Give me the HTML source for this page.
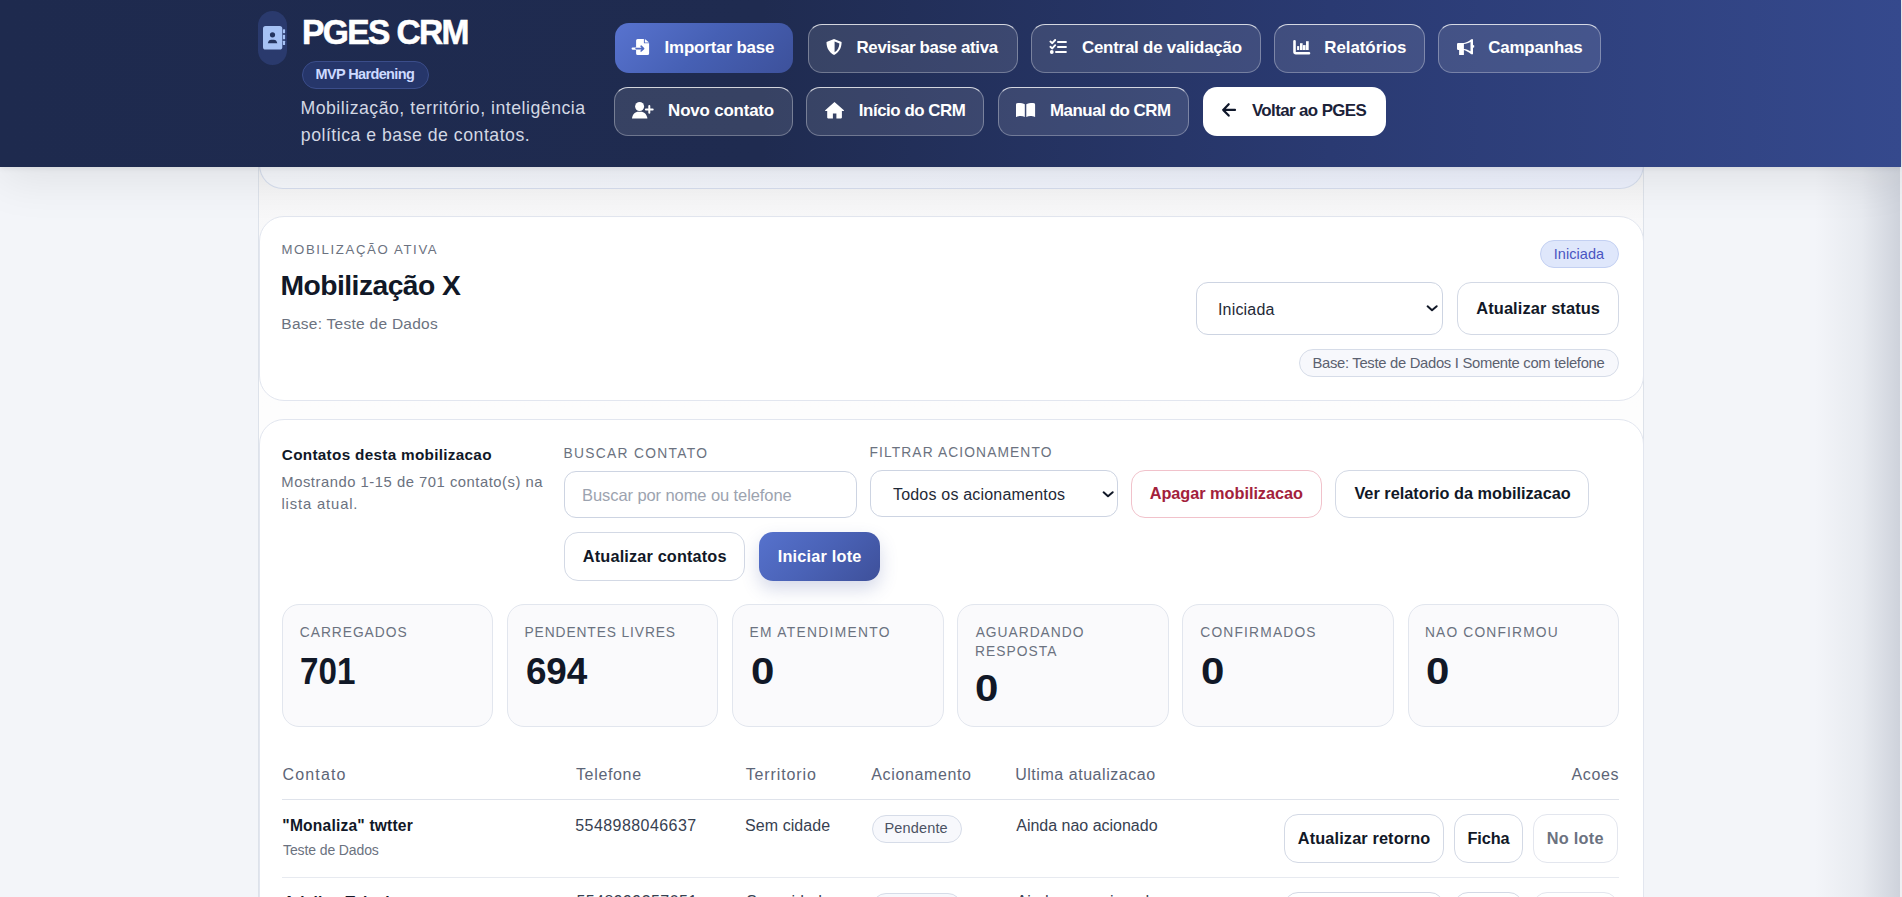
<!DOCTYPE html>
<html><head><meta charset="utf-8"><title>PGES CRM</title>
<style>
html,body{margin:0;padding:0}
body{width:1902px;height:897px;overflow:hidden;position:relative;background:#f3f5f9;font-family:"Liberation Sans",sans-serif}
.tx{position:absolute;white-space:nowrap;font-family:"Liberation Sans",sans-serif}
.bx{position:absolute;box-sizing:border-box}
.edge{left:1815px;top:0;width:85px;height:897px;background:linear-gradient(90deg,rgba(200,205,215,0) 0%,rgba(200,205,215,0.28) 55%,rgba(192,197,208,0.72) 100%)}
.edge2{left:1900px;top:0;width:2px;height:897px;background:#eef0f3}
.wrap{left:258px;top:150px;width:1386px;height:760px;border-left:1px solid #dde2ea;border-right:1px solid #dde2ea;background:linear-gradient(180deg,#f3f3f4 17px,#f8f8f9 66px,#fcfcfd 140px,#fdfdfd 260px)}
.hdr{left:0;top:0;width:1901px;height:167px;background:linear-gradient(90deg,#1e2a4e 0%,#1f2b50 40%,#2a3a72 70%,#35498d 100%);box-shadow:0 2px 5px rgba(0,0,0,0.06),0 12px 44px rgba(0,0,0,0.085)}
.pill{left:258px;top:11px;width:29px;height:54px;border-radius:15px;background:#2a3a6d}
.badge{left:302px;top:61px;width:127px;height:28px;border-radius:14px;background:#26366a;border:1px solid #3b4d8a}
.nb{border-radius:14px;background:rgba(255,255,255,0.11);border:1px solid rgba(255,255,255,0.32);border-top-color:rgba(255,255,255,0.78);border-bottom-color:rgba(255,255,255,0.28)}
.np{border-radius:14px;background:linear-gradient(135deg,#5873cf 0%,#4660b4 50%,#3d519b 100%)}
.nw{border-radius:14px;background:#ffffff}
.card{border-radius:25px;background:#fff;border:1px solid #e2e6ef}
.topcard{left:258.5px;top:90px;width:1385px;height:99px;border-radius:0 0 24px 24px;background:linear-gradient(90deg,#f6f8fc 0%,#edf1fd 100%);border:1px solid #d6deee;border-top:none}
.sel{border-radius:12px;background:#fff;border:1px solid #cdd4e2}
.ob{border-radius:14px;background:#fff;border:1px solid #d3d9e5}
.od{border-radius:14px;background:#fff;border:1px solid #f1c2cb}
.ol{border-radius:14px;background:#fff;border:1px solid #e3e6ee}
.pb{border-radius:14px;background:linear-gradient(135deg,#5672cd 0%,#4a62b6 50%,#3e509a 100%);box-shadow:0 8px 18px rgba(63,82,156,0.22)}
.chipb{border-radius:15px;background:#dfe7fb;border:1px solid #c3d0f2}
.chipg{border-radius:15px;background:#f7f8fc;border:1px solid #d6dce8}
.stat{border-radius:17px;background:#fafafc;border:1px solid #e2e6ee}
.line{height:1px;background:#dfe3eb}
svg.ic{position:absolute;overflow:visible}

</style></head><body>
<div class="bx edge"></div>
<div class="bx edge2"></div>
<div class="bx wrap"></div>
<div class="bx topcard"></div>
<div class="bx card" style="left:258.5px;top:216.0px;width:1385.00px;height:185.00px;"></div>
<div class="bx card" style="left:258.5px;top:419.0px;width:1385.00px;height:681.00px;"></div>
<div class="bx hdr"></div>
<div class="bx pill"></div>
<div class="bx badge"></div>
<svg class="ic" style="left:263px;top:25.6px" width="23" height="24" viewBox="0 0 23 24">
<rect x="0" y="0" width="19.3" height="23.5" rx="2.6" fill="#a6c2f5"/>
<rect x="19.9" y="3.2" width="2.2" height="4" rx="0.6" fill="#a6c2f5"/>
<rect x="19.9" y="8.8" width="2.2" height="4.5" rx="0.6" fill="#a6c2f5"/>
<rect x="19.9" y="14.7" width="2.2" height="4.4" rx="0.6" fill="#a6c2f5"/>
<circle cx="9.5" cy="8.8" r="2.6" fill="#24345f"/>
<path d="M4.8,17.3 C5.3,14.6 6.6,13.7 8.2,13.7 H10.9 C12.5,13.7 13.8,14.6 14.3,17.3 Z" fill="#24345f"/>
</svg>
<div class="bx np" style="left:614.5px;top:23.0px;width:178.50px;height:50.00px;"></div>
<div class="bx nb" style="left:807.7px;top:24.0px;width:209.90px;height:49.00px;"></div>
<div class="bx nb" style="left:1031.3px;top:24.0px;width:229.30px;height:49.00px;"></div>
<div class="bx nb" style="left:1274.2px;top:24.0px;width:150.40px;height:49.00px;"></div>
<div class="bx nb" style="left:1438.0px;top:24.0px;width:162.80px;height:49.00px;"></div>
<div class="bx nb" style="left:614.4px;top:87.0px;width:178.30px;height:49.00px;"></div>
<div class="bx nb" style="left:806.3px;top:87.0px;width:177.50px;height:49.00px;"></div>
<div class="bx nb" style="left:998.2px;top:87.0px;width:191.20px;height:49.00px;"></div>
<div class="bx nw" style="left:1203.0px;top:87.0px;width:183.00px;height:49.00px;"></div>
<svg class="ic" style="left:632.3px;top:38.9px" width="18" height="16" viewBox="0 0 18 16">
<path d="M5.6,0 H11.9 V4.3 H17.1 V14.4 Q17.1,16 15.5,16 H5.7 Q4.1,16 4.1,14.4 V1.6 Q4.1,0 5.6,0 Z" fill="#ffffff"/>
<path d="M12.9,0 L17.1,3.4 H12.9 Z" fill="#ffffff"/>
<path d="M0.6,9.6 H4.1" stroke="#ffffff" stroke-width="2.1" stroke-linecap="round"/>
<path d="M4.1,9.6 H11.3 M9.1,7.2 L11.6,9.6 L9.1,12.0" stroke="#4f69c1" stroke-width="1.6" fill="none" stroke-linecap="round" stroke-linejoin="round"/>
</svg>
<svg class="ic" style="left:825.8px;top:38.9px" width="17" height="16" viewBox="0 0 17 16">
<path fill-rule="evenodd" d="M8.05,0 L15.6,3.1 C15.6,9.2 13,13.6 8.05,16 C3.1,13.6 0.5,9.2 0.5,3.1 Z M8.6,2.6 V13.3 C11.6,11.6 13.2,8.6 13.4,4.5 Z" fill="#ffffff"/>
</svg>
<svg class="ic" style="left:1049px;top:39px" width="19" height="16" viewBox="0 0 19 16">
<path d="M1.4,2.6 L3.3,4.2 L6.2,1.0 M1.4,7.8 L3.3,9.4 L6.2,6.2" stroke="#ffffff" stroke-width="1.9" fill="none" stroke-linecap="round" stroke-linejoin="round"/>
<circle cx="2.8" cy="13.0" r="1.9" fill="#ffffff"/>
<rect x="8" y="2.1" width="9.9" height="1.9" rx="0.9" fill="#ffffff"/>
<rect x="8" y="7.0" width="9.9" height="1.9" rx="0.9" fill="#ffffff"/>
<rect x="6" y="12.0" width="11.9" height="2.0" rx="1" fill="#ffffff"/>
</svg>
<svg class="ic" style="left:1293px;top:39.8px" width="18" height="15" viewBox="0 0 18 15">
<path d="M1.5,1.3 V11.8 Q1.5,13.2 2.9,13.2 H16" stroke="#ffffff" stroke-width="2.6" fill="none" stroke-linecap="round"/>
<rect x="4.1" y="6.1" width="2.1" height="3.9" fill="#ffffff"/>
<rect x="7.0" y="3.2" width="2.6" height="6.8" fill="#ffffff"/>
<rect x="10.0" y="5.1" width="2.6" height="4.9" fill="#ffffff"/>
<rect x="13.0" y="1.2" width="2.7" height="8.8" fill="#ffffff"/>
</svg>
<svg class="ic" style="left:1456.9px;top:38.9px" width="18" height="16" viewBox="0 0 18 16">
<path fill-rule="evenodd" d="M1.2,3.9 H6.9 C9.5,3.6 11.8,2.2 14.2,0.2 H16 V15.2 H14.2 C11.8,13.2 9.5,11.9 6.9,11 H6.9 V16 H2.1 V11 H1.2 Q0,11 0,9.8 V5.1 Q0,3.9 1.2,3.9 Z M6.9,5 V10 C9.5,10.3 11.4,11.2 13.5,12.3 V3.1 C11.4,4.3 9.5,4.9 6.9,5 Z" fill="#ffffff"/>
<rect x="16" y="6.1" width="1.2" height="2.6" rx="0.6" fill="#ffffff"/>
</svg>
<svg class="ic" style="left:632.3px;top:101.5px" width="22" height="17" viewBox="0 0 22 17">
<circle cx="7.6" cy="4.5" r="4.5" fill="#ffffff"/>
<path d="M0,16.4 C0.4,12.3 3.1,9.7 6.5,9.7 H8.7 C12.1,9.7 14.9,12.3 15.4,16.4 Z" fill="#ffffff"/>
<path d="M17.3,4.0 V10.8 M13.9,7.4 H20.7" stroke="#ffffff" stroke-width="2" stroke-linecap="round"/>
</svg>
<svg class="ic" style="left:825px;top:101.5px" width="20" height="17" viewBox="0 0 20 17">
<path d="M9.5,0.1 L18.9,8.2 Q19.3,9 18.4,9.1 H16.9 V15.6 Q16.9,16.4 16.1,16.4 H11.4 V11.6 H7.9 V16.4 H3.0 Q2.2,16.4 2.2,15.6 V9.1 H0.7 Q-0.2,9 0.2,8.2 Z" fill="#ffffff"/>
</svg>
<svg class="ic" style="left:1016.2px;top:102.9px" width="20" height="15" viewBox="0 0 20 15">
<path d="M0,1.4 Q0,0.1 2.2,0.1 C5,0.1 7.5,0.4 8.8,1.3 V14.1 C7.5,13.5 6.2,13.1 4.6,13.1 C3.1,13.1 2,13.5 0,14.1 Z" fill="#ffffff"/>
<path d="M19.1,1.4 Q19.1,0.1 16.9,0.1 C14.1,0.1 11.6,0.4 10.3,1.3 V14.1 C11.6,13.5 12.9,13.1 14.5,13.1 C16,13.1 17.1,13.5 19.1,14.1 Z" fill="#ffffff"/>
</svg>
<svg class="ic" style="left:1221px;top:103px" width="17" height="14" viewBox="0 0 17 14">
<path d="M2.2,6.9 H14 M7.7,1.2 L2.2,6.9 L7.7,12.6" stroke="#0f172a" stroke-width="2.2" fill="none" stroke-linecap="round" stroke-linejoin="round"/>
</svg>
<div class="bx chipb" style="left:1540.0px;top:240.1px;width:79.10px;height:28.40px;"></div>
<div class="bx sel" style="left:1196.2px;top:282.4px;width:246.60px;height:52.20px;"></div>
<svg class="ic" style="left:1426px;top:305px" width="12" height="7" viewBox="0 0 12 7">
<path d="M1.6,1.3 L6.0,5.2 L10.7,1.2" stroke="#111827" stroke-width="2" fill="none" stroke-linecap="round" stroke-linejoin="round"/>
</svg>
<div class="bx ob" style="left:1457.2px;top:282.4px;width:161.60px;height:52.20px;"></div>
<div class="bx chipg" style="left:1299.2px;top:349.0px;width:319.80px;height:28.40px;"></div>
<div class="bx sel" style="left:564.2px;top:471.3px;width:292.40px;height:46.40px;"></div>
<div class="bx sel" style="left:870.2px;top:470.3px;width:247.60px;height:47.20px;"></div>
<svg class="ic" style="left:1101.5px;top:490.5px" width="12" height="7" viewBox="0 0 12 7">
<path d="M1.6,1.3 L6.0,5.2 L10.7,1.2" stroke="#111827" stroke-width="2" fill="none" stroke-linecap="round" stroke-linejoin="round"/>
</svg>
<div class="bx od" style="left:1131.4px;top:469.6px;width:190.60px;height:48.00px;"></div>
<div class="bx ob" style="left:1335.0px;top:469.6px;width:253.70px;height:48.00px;"></div>
<div class="bx ob" style="left:564.2px;top:532.3px;width:181.30px;height:48.30px;"></div>
<div class="bx pb" style="left:758.9px;top:532.3px;width:120.80px;height:48.30px;"></div>
<div class="bx stat" style="left:282.0px;top:604.0px;width:211.40px;height:122.50px;"></div>
<div class="bx stat" style="left:507.1px;top:604.0px;width:211.40px;height:122.50px;"></div>
<div class="bx stat" style="left:732.2px;top:604.0px;width:211.40px;height:122.50px;"></div>
<div class="bx stat" style="left:957.3px;top:604.0px;width:211.40px;height:122.50px;"></div>
<div class="bx stat" style="left:1182.4px;top:604.0px;width:211.40px;height:122.50px;"></div>
<div class="bx stat" style="left:1407.5px;top:604.0px;width:211.40px;height:122.50px;"></div>
<div class="bx line" style="left:282.0px;top:799.0px;width:1337.00px;height:1.00px;"></div>
<div class="bx line" style="left:282.0px;top:877.0px;width:1337.00px;height:1.00px;background:#e7eaf0"></div>
<div class="bx chipg" style="left:871.5px;top:814.5px;width:90.40px;height:28.00px;"></div>
<div class="bx ob" style="left:1283.5px;top:814.4px;width:160.80px;height:48.20px;"></div>
<div class="bx ob" style="left:1454.1px;top:814.4px;width:69.40px;height:48.20px;"></div>
<div class="bx ol" style="left:1533.4px;top:814.4px;width:84.20px;height:48.20px;"></div>
<div class="bx chipg" style="left:871.5px;top:892.5px;width:90.40px;height:28.00px;"></div>
<div class="bx ob" style="left:1283.5px;top:892.4px;width:160.80px;height:48.20px;"></div>
<div class="bx ob" style="left:1454.1px;top:892.4px;width:69.40px;height:48.20px;"></div>
<div class="bx ol" style="left:1533.4px;top:892.4px;width:84.20px;height:48.20px;"></div>
<div class="tx" style="left:283.5px;top:895.19px;font-size:15.6px;line-height:15.6px;font-weight:700;letter-spacing:0.18px;color:#111827">Adelina Teixeira</div>
<div class="tx" style="left:576.4px;top:894.26px;font-size:16.0px;line-height:16.0px;font-weight:400;letter-spacing:0.43px;color:#374151">5548999357051</div>
<div class="tx" style="left:746.2px;top:894.26px;font-size:16.0px;line-height:16.0px;font-weight:400;letter-spacing:0.0px;color:#374151">Sem cidade</div>
<div class="tx" style="left:1016.5px;top:894.26px;font-size:16.0px;line-height:16.0px;font-weight:400;letter-spacing:0.0px;color:#374151">Ainda nao acionado</div>
<div class="tx" id="h_title" style="left:301.50px;top:13.69px;font-size:35.3px;line-height:35.3px;font-weight:700;letter-spacing:-1.704px;color:#ffffff;transform:scaleX(0.9500);transform-origin:0 0;-webkit-text-stroke:0.6px currentColor;">PGES CRM</div>
<div class="tx" id="h_badge" style="left:315.54px;top:67.01px;font-size:14.5px;line-height:14.5px;font-weight:700;letter-spacing:-0.634px;color:#cddaff;">MVP Hardening</div>
<div class="tx" id="h_sub1" style="left:300.40px;top:99.99px;font-size:17.7px;line-height:17.7px;font-weight:400;letter-spacing:0.508px;color:#d3d8e4;">Mobilização, território, inteligência</div>
<div class="tx" id="h_sub2" style="left:300.85px;top:126.79px;font-size:17.7px;line-height:17.7px;font-weight:400;letter-spacing:0.498px;color:#d3d8e4;">política e base de contatos.</div>
<div class="tx" id="n1" style="left:664.52px;top:39.97px;font-size:16.9px;line-height:16.9px;font-weight:700;letter-spacing:-0.143px;color:#ffffff;">Importar base</div>
<div class="tx" id="n2" style="left:856.52px;top:39.85px;font-size:16.9px;line-height:16.9px;font-weight:700;letter-spacing:-0.340px;color:#ffffff;">Revisar base ativa</div>
<div class="tx" id="n3" style="left:1081.97px;top:39.85px;font-size:16.9px;line-height:16.9px;font-weight:700;letter-spacing:-0.225px;color:#ffffff;">Central de validação</div>
<div class="tx" id="n4" style="left:1324.28px;top:39.87px;font-size:16.9px;line-height:16.9px;font-weight:700;letter-spacing:-0.041px;color:#ffffff;">Relatórios</div>
<div class="tx" id="n5" style="left:1488.17px;top:39.85px;font-size:16.9px;line-height:16.9px;font-weight:700;letter-spacing:-0.142px;color:#ffffff;">Campanhas</div>
<div class="tx" id="n6" style="left:668.11px;top:102.57px;font-size:16.9px;line-height:16.9px;font-weight:700;letter-spacing:-0.173px;color:#ffffff;">Novo contato</div>
<div class="tx" id="n7" style="left:858.80px;top:102.96px;font-size:16.9px;line-height:16.9px;font-weight:700;letter-spacing:-0.455px;color:#ffffff;">Início do CRM</div>
<div class="tx" id="n8" style="left:1049.91px;top:102.61px;font-size:16.9px;line-height:16.9px;font-weight:700;letter-spacing:-0.449px;color:#ffffff;">Manual do CRM</div>
<div class="tx" id="n9" style="left:1251.93px;top:102.57px;font-size:16.9px;line-height:16.9px;font-weight:700;letter-spacing:-0.600px;color:#1b2238;">Voltar ao PGES</div>
<div class="tx" id="c1_lab" style="left:281.43px;top:242.71px;font-size:13.2px;line-height:13.2px;font-weight:400;letter-spacing:1.625px;color:#6b7280;">MOBILIZAÇÃO ATIVA</div>
<div class="tx" id="c1_title" style="left:280.62px;top:270.80px;font-size:28.3px;line-height:28.3px;font-weight:700;letter-spacing:-0.572px;color:#111827;">Mobilização X</div>
<div class="tx" id="c1_base" style="left:281.34px;top:315.62px;font-size:15.5px;line-height:15.5px;font-weight:400;letter-spacing:0.266px;color:#6b7280;">Base: Teste de Dados</div>
<div class="tx" id="c1_badge" style="left:1553.65px;top:246.85px;font-size:14.5px;line-height:14.5px;font-weight:400;letter-spacing:0.073px;color:#4a55c2;">Iniciada</div>
<div class="tx" id="c1_sel" style="left:1218.01px;top:301.72px;font-size:16.0px;line-height:16.0px;font-weight:400;letter-spacing:0.172px;color:#1f2937;">Iniciada</div>
<div class="tx" id="c1_btn" style="left:1476.24px;top:300.36px;font-size:16.4px;line-height:16.4px;font-weight:700;letter-spacing:0.112px;color:#111827;">Atualizar status</div>
<div class="tx" id="c1_chip" style="left:1312.47px;top:355.95px;font-size:14.8px;line-height:14.8px;font-weight:400;letter-spacing:-0.301px;color:#5b6170;">Base: Teste de Dados I Somente com telefone</div>
<div class="tx" id="c2_title" style="left:281.79px;top:446.57px;font-size:15.3px;line-height:15.3px;font-weight:700;letter-spacing:0.297px;color:#111827;">Contatos desta mobilizacao</div>
<div class="tx" id="c2_sub1" style="left:281.32px;top:474.77px;font-size:14.8px;line-height:14.8px;font-weight:400;letter-spacing:0.522px;color:#6b7280;">Mostrando 1-15 de 701 contato(s) na</div>
<div class="tx" id="c2_sub2" style="left:281.49px;top:496.60px;font-size:14.8px;line-height:14.8px;font-weight:400;letter-spacing:0.850px;color:#6b7280;">lista atual.</div>
<div class="tx" id="c2_lab1" style="left:563.41px;top:447.02px;font-size:13.8px;line-height:13.8px;font-weight:400;letter-spacing:1.322px;color:#6b7280;">BUSCAR CONTATO</div>
<div class="tx" id="c2_ph" style="left:582.09px;top:487.03px;font-size:16.5px;line-height:16.5px;font-weight:400;letter-spacing:-0.088px;color:#9ca3af;">Buscar por nome ou telefone</div>
<div class="tx" id="c2_lab2" style="left:869.52px;top:446.25px;font-size:13.8px;line-height:13.8px;font-weight:400;letter-spacing:1.108px;color:#6b7280;">FILTRAR ACIONAMENTO</div>
<div class="tx" id="c2_sel" style="left:892.97px;top:487.22px;font-size:16.0px;line-height:16.0px;font-weight:400;letter-spacing:0.196px;color:#1f2937;">Todos os acionamentos</div>
<div class="tx" id="c2_del" style="left:1149.67px;top:485.44px;font-size:16.3px;line-height:16.3px;font-weight:700;letter-spacing:-0.026px;color:#a3213b;">Apagar mobilizacao</div>
<div class="tx" id="c2_rep" style="left:1354.42px;top:485.47px;font-size:16.3px;line-height:16.3px;font-weight:700;letter-spacing:0.002px;color:#111827;">Ver relatorio da mobilizacao</div>
<div class="tx" id="c2_upd" style="left:582.86px;top:548.48px;font-size:16.3px;line-height:16.3px;font-weight:700;letter-spacing:0.149px;color:#111827;">Atualizar contatos</div>
<div class="tx" id="c2_lote" style="left:777.75px;top:547.58px;font-size:16.3px;line-height:16.3px;font-weight:700;letter-spacing:0.195px;color:#ffffff;">Iniciar lote</div>
<div class="tx" id="s_lab0" style="left:299.86px;top:626.04px;font-size:13.8px;line-height:13.8px;font-weight:400;letter-spacing:0.955px;color:#6b7280;">CARREGADOS</div>
<div class="tx" id="s_val0" style="left:300.47px;top:653.62px;font-size:36.9px;line-height:36.9px;font-weight:700;letter-spacing:-0.028px;color:#111827;transform:scaleX(0.9000);transform-origin:0 0;">701</div>
<div class="tx" id="s_lab1" style="left:524.52px;top:625.62px;font-size:13.8px;line-height:13.8px;font-weight:400;letter-spacing:0.888px;color:#6b7280;">PENDENTES LIVRES</div>
<div class="tx" id="s_val1" style="left:525.97px;top:653.90px;font-size:36.9px;line-height:36.9px;font-weight:700;letter-spacing:-0.159px;color:#111827;">694</div>
<div class="tx" id="s_lab2" style="left:749.56px;top:626.04px;font-size:13.8px;line-height:13.8px;font-weight:400;letter-spacing:1.315px;color:#6b7280;">EM ATENDIMENTO</div>
<div class="tx" id="s_val2" style="left:750.55px;top:653.90px;font-size:36.9px;line-height:36.9px;font-weight:700;letter-spacing:0.000px;color:#111827;transform:scaleX(1.1392);transform-origin:0 0;">0</div>
<div class="tx" id="s_lab3" style="left:975.67px;top:625.61px;font-size:13.8px;line-height:13.8px;font-weight:400;letter-spacing:0.983px;color:#6b7280;">AGUARDANDO</div>
<div class="tx" id="s_val3" style="left:975.46px;top:670.94px;font-size:36.9px;line-height:36.9px;font-weight:700;letter-spacing:0.000px;color:#111827;transform:scaleX(1.1392);transform-origin:0 0;">0</div>
<div class="tx" id="s_lab4" style="left:1200.26px;top:626.04px;font-size:13.8px;line-height:13.8px;font-weight:400;letter-spacing:1.185px;color:#6b7280;">CONFIRMADOS</div>
<div class="tx" id="s_val4" style="left:1201.19px;top:653.90px;font-size:36.9px;line-height:36.9px;font-weight:700;letter-spacing:0.000px;color:#111827;transform:scaleX(1.1397);transform-origin:0 0;">0</div>
<div class="tx" id="s_lab5" style="left:1424.98px;top:626.40px;font-size:13.8px;line-height:13.8px;font-weight:400;letter-spacing:1.162px;color:#6b7280;">NAO CONFIRMOU</div>
<div class="tx" id="s_val5" style="left:1426.11px;top:653.90px;font-size:36.9px;line-height:36.9px;font-weight:700;letter-spacing:0.000px;color:#111827;transform:scaleX(1.1397);transform-origin:0 0;">0</div>
<div class="tx" id="s_lab3b" style="left:974.91px;top:645.32px;font-size:13.8px;line-height:13.8px;font-weight:400;letter-spacing:1.056px;color:#6b7280;">RESPOSTA</div>
<div class="tx" id="th1" style="left:282.57px;top:767.49px;font-size:16.0px;line-height:16.0px;font-weight:400;letter-spacing:1.151px;color:#5d6577;">Contato</div>
<div class="tx" id="th2" style="left:575.97px;top:767.03px;font-size:16.0px;line-height:16.0px;font-weight:400;letter-spacing:0.656px;color:#5d6577;">Telefone</div>
<div class="tx" id="th3" style="left:745.68px;top:767.16px;font-size:16.0px;line-height:16.0px;font-weight:400;letter-spacing:0.881px;color:#5d6577;">Territorio</div>
<div class="tx" id="th4" style="left:871.24px;top:766.52px;font-size:16.0px;line-height:16.0px;font-weight:400;letter-spacing:0.639px;color:#5d6577;">Acionamento</div>
<div class="tx" id="th5" style="left:1015.14px;top:767.40px;font-size:16.0px;line-height:16.0px;font-weight:400;letter-spacing:0.546px;color:#5d6577;">Ultima atualizacao</div>
<div class="tx" id="th6" style="left:1571.53px;top:767.11px;font-size:16.0px;line-height:16.0px;font-weight:400;letter-spacing:0.642px;color:#5d6577;">Acoes</div>
<div class="tx" id="r1_name" style="left:282.35px;top:817.87px;font-size:15.6px;line-height:15.6px;font-weight:700;letter-spacing:0.189px;color:#111827;">"Monaliza" twtter</div>
<div class="tx" id="r1_base" style="left:283.09px;top:842.89px;font-size:14.0px;line-height:14.0px;font-weight:400;letter-spacing:-0.120px;color:#6b7280;">Teste de Dados</div>
<div class="tx" id="r1_tel" style="left:575.31px;top:818.03px;font-size:16.0px;line-height:16.0px;font-weight:400;letter-spacing:0.427px;color:#374151;">5548988046637</div>
<div class="tx" id="r1_ter" style="left:745.11px;top:817.94px;font-size:16.0px;line-height:16.0px;font-weight:400;letter-spacing:0.049px;color:#374151;">Sem cidade</div>
<div class="tx" id="r1_pend" style="left:884.50px;top:820.56px;font-size:14.5px;line-height:14.5px;font-weight:400;letter-spacing:0.152px;color:#4b5263;">Pendente</div>
<div class="tx" id="r1_upd" style="left:1016.24px;top:818.06px;font-size:16.0px;line-height:16.0px;font-weight:400;letter-spacing:-0.008px;color:#374151;">Ainda nao acionado</div>
<div class="tx" id="r1_b1" style="left:1297.86px;top:829.96px;font-size:16.3px;line-height:16.3px;font-weight:700;letter-spacing:0.130px;color:#111827;">Atualizar retorno</div>
<div class="tx" id="r1_b2" style="left:1467.47px;top:830.02px;font-size:16.3px;line-height:16.3px;font-weight:700;letter-spacing:-0.119px;color:#111827;">Ficha</div>
<div class="tx" id="r1_b3" style="left:1546.86px;top:829.96px;font-size:16.3px;line-height:16.3px;font-weight:700;letter-spacing:0.250px;color:#6b7280;">No lote</div>
</body></html>
